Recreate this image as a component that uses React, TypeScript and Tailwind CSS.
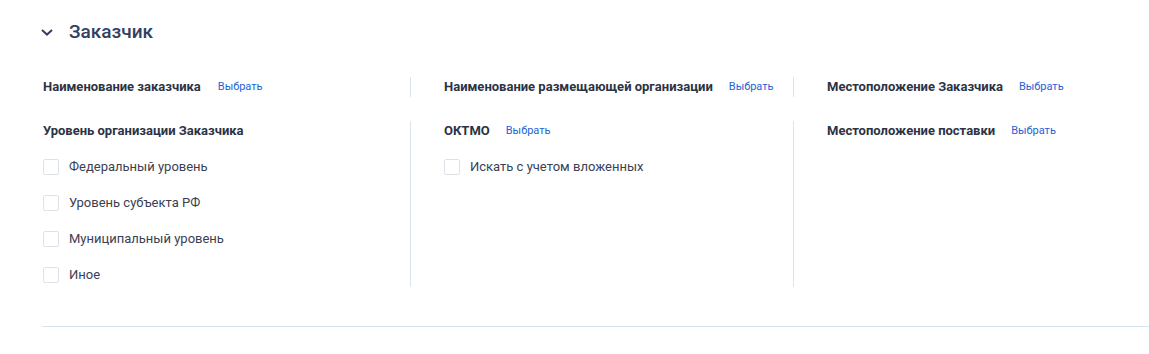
import { useState } from 'react';

const LEVELS = ['Федеральный уровень', 'Уровень субъекта РФ', 'Муниципальный уровень', 'Иное'];

function Pick({ first }: { first?: boolean }) {
    return (
        <button className={`${first ? 'ml-[17px]' : 'ml-4'} text-[11px] leading-[18px] text-[#2463d6] hover:underline`}>
            Выбрать
        </button>
    );
}

function Check({ label }: { label: string }) {
    const [on, setOn] = useState(false);
    return (
        <label className="flex items-center h-4 cursor-pointer select-none">
            <span
                onClick={() => setOn(!on)}
                className={`w-4 h-4 rounded-[2px] border ${on ? 'bg-[#2463d6] border-[#2463d6]' : 'bg-white border-[#dde2e8]'}`}
            />
            <span className="ml-[10px] text-[13px] leading-4 text-[#3a4152]">{label}</span>
        </label>
    );
}

export default function App() {
    return (
        <div className="bg-white w-[1149px] h-[354px] overflow-hidden font-['Roboto',sans-serif] text-[#2c3344]">
            <div className="pl-[41px] pt-5">
                {/* Header */}
                <div className="flex items-center h-6">
                    <svg width="12" height="7" viewBox="0 0 12 7" fill="none" className="mt-[1px]">
                        <path d="M1 1l5 4.6L11 1" stroke="#334060" strokeWidth="2" />
                    </svg>
                    <h2 className="ml-4 text-[19px] font-medium leading-6 text-[#344061]">Заказчик</h2>
                </div>

                {/* Row 1 */}
                <div className="flex mt-[33px] h-5">
                    <div className="w-[369px] flex items-center pl-[2px]">
                        <span className="text-[13px] font-bold">Наименование заказчика</span>
                        <Pick first />
                    </div>
                    <div className="w-[383px] border-l border-[#dbe4ee] pl-[33px] flex items-center">
                        <span className="text-[13px] font-bold">Наименование размещающей организации</span>
                        <Pick />
                    </div>
                    <div className="border-l border-[#dbe4ee] pl-[33px] flex items-center">
                        <span className="text-[13px] font-bold">Местоположение Заказчика</span>
                        <Pick />
                    </div>
                </div>

                {/* Row 2 */}
                <div className="flex mt-6 h-[166px]">
                    <div className="w-[369px] pl-[2px] pt-[1px]">
                        <div className="text-[13px] font-bold leading-[18px]">Уровень организации Заказчика</div>
                        <div className="flex flex-col gap-5 mt-[19px]">
                            {LEVELS.map((l) => <Check key={l} label={l} />)}
                        </div>
                    </div>
                    <div className="w-[383px] border-l border-[#dbe4ee] pl-[33px] pt-[1px]">
                        <div className="flex items-center">
                            <span className="text-[13px] font-bold leading-[18px]">ОКТМО</span>
                            <Pick />
                        </div>
                        <div className="mt-[19px]">
                            <Check label="Искать с учетом вложенных" />
                        </div>
                    </div>
                    <div className="border-l border-[#dbe4ee] pl-[33px] pt-[1px]">
                        <div className="flex items-center">
                            <span className="text-[13px] font-bold leading-[18px]">Местоположение поставки</span>
                            <Pick />
                        </div>
                    </div>
                </div>

                <div className="mt-[39px] ml-[1px] border-t border-[#dbe4ee]" />
            </div>
        </div>
    );
}
